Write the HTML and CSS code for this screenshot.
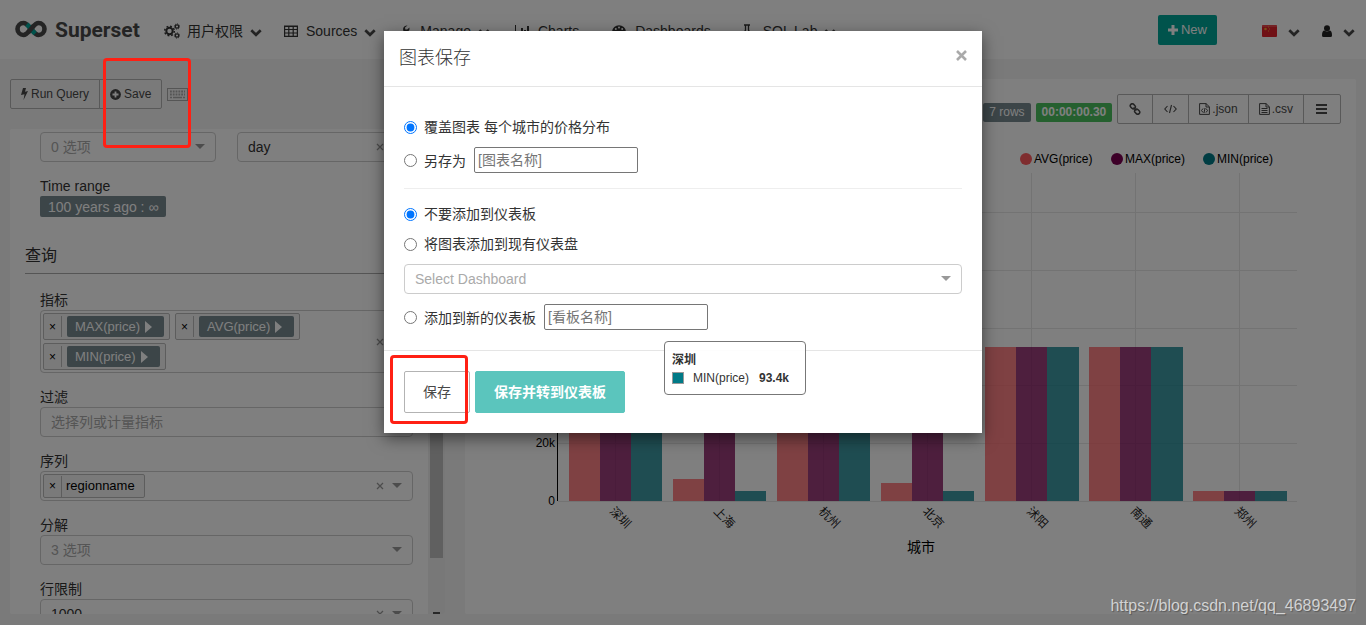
FILE: index.html
```html
<!DOCTYPE html>
<html lang="zh-CN">
<head>
<meta charset="utf-8">
<title>Superset</title>
<link rel="stylesheet" href="styles.css">
</head>
<body>
<svg class="defs" aria-hidden="true">
  <symbol id="chev" viewBox="0 0 12 8"><path d="M1.300 1.300 6 5.800l4.700-4.500" fill="none" stroke="currentColor" stroke-width="2.700"/></symbol>
  <symbol id="cross" viewBox="0 0 8 8"><path d="M1 1l6 6M7 1 1 7" fill="none" stroke="currentColor" stroke-width="1.300"/></symbol>
</svg>
<div class="app">
  <header class="navbar">
    <a class="brand" href="#">
      <svg width="32" height="18" viewBox="0 0 32 18"><g fill="none" stroke-width="4.600" stroke="#484848"><path d="M16 9C13 5.500 11.500 3 8.500 3a6 6 0 0 0 0 12C11.500 15 13 12.500 16 9s4.500-6 7.500-6a6 6 0 0 1 0 12C20.500 15 19 12.500 16 9z"/><path stroke="#00a699" d="M11.800 4.300Q14 6.300 16 9 18 11.500 20.200 13.700"/><path d="M13.300 12.200 18.700 5.800"/></g></svg>
      <span>Superset</span>
    </a>
    <nav class="menu">
      <a class="item" href="#"><svg class="ico" viewBox="0 0 16 16"><circle cx="5.500" cy="8" r="3.200" fill="none" stroke="currentColor" stroke-width="2"/><circle cx="5.500" cy="8" r="4.800" fill="none" stroke="currentColor" stroke-width="1.500" stroke-dasharray="1.900 1.870"/><g fill="none" stroke="currentColor"><circle cx="13" cy="3.500" r="1.700" stroke-width="1.200"/><circle cx="13" cy="3.500" r="2.600" stroke-dasharray="1 1"/><circle cx="13" cy="12.500" r="1.700" stroke-width="1.200"/><circle cx="13" cy="12.500" r="2.600" stroke-dasharray="1 1"/></g></svg>用户权限<svg class="chev"><use href="#chev"/></svg></a>
      <a class="item" href="#"><svg class="ico" viewBox="0 0 16 16"><path d="M1.600 3h12.800v10.400H1.600zM1 3.400h14M1.500 6.500h13M1.500 10h13M5.800 3v10M10.200 3v10" fill="none" stroke="currentColor" stroke-width="1.200"/></svg>Sources<svg class="chev"><use href="#chev"/></svg></a>
      <a class="item" href="#"><svg class="ico" viewBox="0 0 16 16"><path d="M2 13 6.500 8.500a4 4 0 0 1 4-6L8 4.500l.3 1.900 1.900.2L12.500 4.500a4 4 0 0 1-5.200 4.500L3.500 14.500z" fill="currentColor"/></svg>Manage<svg class="chev"><use href="#chev"/></svg></a>
      <a class="item plain" href="#"><svg class="ico" viewBox="0 0 16 16"><path d="M.5 2v11.500H16" fill="none" stroke="currentColor"/><path d="M3 9h2v3.500H3zM6 5h2v7.500H6zM9 7h2v5.500H9zM12 3h2v9.500h-2z" fill="currentColor"/></svg>Charts</a>
      <a class="item plain" href="#"><svg class="ico" viewBox="0 0 16 16"><path d="M1.500 13.500a7 7 0 1 1 11 0z" fill="currentColor"/><g fill="#fff"><circle cx="7" cy="4.500" r="1"/><circle cx="3.800" cy="6" r="1"/><circle cx="10.200" cy="6" r="1"/><circle cx="2.500" cy="9.500" r="1"/><circle cx="11.500" cy="9.500" r="1"/></g></svg>Dashboards</a>
      <a class="item" href="#"><svg class="ico" viewBox="0 0 16 16"><path d="M4 2h6M5.500 2v5L2 13.500h10L8.500 7V2" fill="none" stroke="currentColor" stroke-width="1.300"/><path d="M4.500 9.500h5l2 4h-9z" fill="currentColor"/></svg>SQL Lab<svg class="chev"><use href="#chev"/></svg></a>
    </nav>
    <button class="new" type="button"><svg width="10" height="10" viewBox="0 0 10 10"><path d="M5 0v10M0 5h10" stroke="currentColor" stroke-width="3"/></svg>New</button>
    <div class="account">
      <button class="drop" type="button" aria-label="语言"><svg class="flag" viewBox="0 0 15 12"><rect width="15" height="12" rx="1" fill="#e0202a"/><path d="M0 1h15" stroke="#f06a6a"/><circle cx="3.500" cy="4" r="1.300" fill="#f0a030"/><path d="M6 2h1M7 4h1M6 6h1" stroke="#f0a030"/></svg><svg class="chev"><use href="#chev"/></svg></button>
      <button class="drop" type="button" aria-label="用户"><svg class="user" viewBox="0 0 10 12"><circle cx="5" cy="3.200" r="3" fill="currentColor"/><path d="M0 10.500Q0 5.500 2.500 5.500q2.500 1.800 5 0Q10 5.500 10 10.500 10 12 8.500 12h-7Q0 12 0 10.500z" fill="currentColor"/></svg><svg class="chev"><use href="#chev"/></svg></button>
    </div>
  </header>

  <main class="explore">
    <section class="left">
      <div class="actions">
        <div class="group">
          <button type="button"><svg width="7" height="12" viewBox="0 0 7 12"><path d="M2 0h3L4 3.700 7 3 2.500 12l1-5.700L0 7z" fill="currentColor"/></svg>Run Query</button>
          <button type="button"><svg width="11" height="11" viewBox="0 0 11 11"><circle cx="5.500" cy="5.500" r="5.400" fill="currentColor"/><path d="M5.500 2.500v6M2.500 5.500h6" stroke="#fff" stroke-width="1.800"/></svg>Save</button>
        </div>
        <svg class="keys" viewBox="0 0 21 13"><rect x=".5" y=".5" width="20" height="12" fill="none" stroke="#aaa"/><path d="M3 3.500h15M3 6.500h15" stroke="#aaa" stroke-width="1.800" stroke-dasharray="1.800 1"/><path d="M3 9.500h2M6 9.500h9M16 9.500h2" stroke="#aaa" stroke-width="1.500"/></svg>
      </div>
      <div class="panel controls">
        <div class="scroll">
          <div class="pair">
            <div class="box"><select aria-label="选项"><option>0 选项</option></select><i class="arrow"></i></div>
            <div class="box"><select class="dark" aria-label="时间粒度"><option>day</option></select><button class="clear" type="button" aria-label="清除"><svg><use href="#cross"/></svg></button><i class="arrow"></i></div>
          </div>
          <div class="field"><span class="name">Time range</span><button class="range" type="button">100 years ago : ∞</button></div>
          <h2>查询</h2>
          <div class="field"><span class="name">指标</span>
            <div class="box">
              <div class="chips">
                <span class="chip"><button type="button">×</button><b>MAX(price)<i class="tri"></i></b></span>
                <span class="chip"><button type="button">×</button><b>AVG(price)<i class="tri"></i></b></span>
                <span class="chip"><button type="button">×</button><b>MIN(price)<i class="tri"></i></b></span>
              </div>
              <button class="clear" type="button" aria-label="清除"><svg><use href="#cross"/></svg></button><i class="arrow"></i>
            </div>
          </div>
          <div class="field"><label class="name" for="filter">过滤</label><div class="box"><select id="filter"><option>选择列或计量指标</option></select></div></div>
          <div class="field"><span class="name">序列</span>
            <div class="box"><div class="chips"><span class="chip text"><button type="button">×</button><em>regionname</em></span></div><button class="clear" type="button" aria-label="清除"><svg><use href="#cross"/></svg></button><i class="arrow"></i></div>
          </div>
          <div class="field"><label class="name" for="split">分解</label><div class="box"><select id="split"><option>3 选项</option></select><i class="arrow"></i></div></div>
          <div class="field"><label class="name" for="limit">行限制</label><div class="box"><select id="limit" class="dark"><option>1000</option></select><button class="clear" type="button" aria-label="清除"><svg><use href="#cross"/></svg></button><i class="arrow"></i></div></div>
        </div>
        <div class="rail"><div class="thumb"></div><div class="dash"></div></div>
      </div>
    </section>

    <section class="panel chart">
      <div class="tools">
        <span class="tag">7 rows</span>
        <span class="tag ok">00:00:00.30</span>
        <div class="group">
          <button type="button" aria-label="链接"><svg width="12" height="12" viewBox="0 0 12 12"><g fill="none" stroke="currentColor" stroke-width="1.500"><rect x="1" y="1.500" width="5.500" height="4" rx="2" transform="rotate(45 4 3.500)"/><rect x="5.500" y="6.500" width="5.500" height="4" rx="2" transform="rotate(45 8 8.500)"/><path d="M4.500 4.500l3 3"/></g></svg></button>
          <button type="button" aria-label="代码"><svg width="13" height="10" viewBox="0 0 13 10"><path d="M3.500 2 .8 5l2.700 3M9.500 2l2.700 3-2.700 3M7.500 1l-2 8" fill="none" stroke="currentColor" stroke-width="1.100"/></svg></button>
          <button type="button"><svg width="11" height="12" viewBox="0 0 11 12"><path d="M.6.6h6.400l3.400 3.200v7.600H.6zM7 .6v3.400h3.400M4 5.500 2.500 7.500 4 9.500M7 5.500l1.500 2L7 9.500M6 5 5 10" fill="none" stroke="currentColor"/></svg>.json</button>
          <button type="button"><svg width="11" height="12" viewBox="0 0 11 12"><path d="M.6.6h6.400l3.400 3.200v7.600H.6zM7 .6v3.400h3.400M2.500 5.500h6M2.500 7.500h6M2.500 9.500h6" fill="none" stroke="currentColor"/></svg>.csv</button>
          <button type="button" aria-label="菜单"><svg width="11" height="10" viewBox="0 0 11 10"><path d="M0 1h11M0 5h11M0 9h11" stroke="currentColor" stroke-width="2"/></svg></button>
        </div>
      </div>
      <svg class="plot" viewBox="0 0 891 490">
        <g class="legend">
          <circle cx="561" cy="35" r="6" fill="#ff5a5f"/><text x="569" y="39">AVG(price)</text>
          <circle cx="652" cy="35" r="6" fill="#7b0051"/><text x="660" y="39">MAX(price)</text>
          <circle cx="744" cy="35" r="6" fill="#007a87"/><text x="752" y="39">MIN(price)</text>
        </g>
        <g transform="translate(93 377)">
          <path class="grid" d="M0-57.500h739M0-115.500h739M0-172.500h739M0-230.500h739M0-288.500h739M0 .5h739M57.500 0v-328M161.500 0v-328M265.500 0v-328M369.500 0v-328M473.500 0v-328M577.500 0v-328M681.500 0v-328"/>
          <g class="bars">
            <path fill="#ff5a5f" d="M11 0v-270h31V0zM115 0v-22h31V0zM219 0v-270h31V0zM323 0v-18h31V0zM427 0v-154h31V0zM531 0v-154h31V0zM635 0v-10h31V0z"/>
            <path fill="#7b0051" d="M42 0v-270h31V0zM146 0v-200h31V0zM250 0v-270h31V0zM354 0v-200h31V0zM458 0v-154h31V0zM562 0v-154h31V0zM666 0v-10h31V0z"/>
            <path fill="#007a87" d="M73 0v-270h31V0zM177 0v-10h31V0zM281 0v-270h31V0zM385 0v-10h31V0zM489 0v-154h32V0zM593 0v-154h32V0zM697 0v-10h32V0z"/>
          </g>
          <path class="axis" d="M-.5 0v-328"/>
          <text class="tick" x="-3" y="-54">20k</text><text class="tick" x="-3" y="4">0</text>
          <g class="cats">
            <text transform="translate(51 11) rotate(45)">深圳</text>
            <text transform="translate(155 11) rotate(45)">上海</text>
            <text transform="translate(260 11) rotate(45)">杭州</text>
            <text transform="translate(364 11) rotate(45)">北京</text>
            <text transform="translate(468 11) rotate(45)">沭阳</text>
            <text transform="translate(572 11) rotate(45)">南通</text>
            <text transform="translate(676 11) rotate(45)">郑州</text>
          </g>
          <text class="title" x="363" y="51">城市</text>
        </g>
      </svg>
    </section>
  </main>
</div>

<div class="backdrop">
  <form class="modal" role="dialog" aria-labelledby="dlg">
    <div class="head"><h1 id="dlg">图表保存</h1><button type="button" aria-label="关闭"><svg width="11" height="11" viewBox="0 0 11 11"><path d="M1 1l9 9M10 1l-9 9" stroke="currentColor" stroke-width="2.600"/></svg></button></div>
    <div class="body">
      <div class="row"><input type="radio" name="act" id="over" checked><label for="over">覆盖图表 每个城市的价格分布</label></div>
      <div class="row tall"><input type="radio" name="act" id="as"><label for="as">另存为</label><input type="text" placeholder="[图表名称]" aria-label="图表名称"></div>
      <hr>
      <div class="row"><input type="radio" name="dash" id="none" checked><label for="none">不要添加到仪表板</label></div>
      <div class="row"><input type="radio" name="dash" id="old"><label for="old">将图表添加到现有仪表盘</label></div>
      <div class="box"><select aria-label="仪表盘"><option>Select Dashboard</option></select><i class="arrow"></i></div>
      <div class="row tall"><input type="radio" name="dash" id="fresh"><label for="fresh">添加到新的仪表板</label><input type="text" placeholder="[看板名称]" aria-label="看板名称"></div>
    </div>
    <div class="foot"><button type="button">保存</button><button class="primary" type="button">保存并转到仪表板</button></div>
  </form>
</div>
<div class="tip"><strong>深圳</strong><div><i></i><span>MIN(price)</span><strong>93.4k</strong></div></div>
<div class="mark mark-top"></div>
<div class="mark mark-save"></div>
<div class="credit">https://blog.csdn.net/qq_46893497</div>
</body>
</html>
```
FILE: styles.css
```css
* { box-sizing: border-box; }
body {
  margin: 0;
  font: 14px/20px "Liberation Sans", "Noto Sans CJK SC", sans-serif;
  color: #333;
  background: #f5f5f5;
}
button, select, input { font: inherit; color: inherit; margin: 0; }
button { background: none; border: 0; padding: 0; }
a { color: inherit; text-decoration: none; }
.defs { position: absolute; width: 0; height: 0; }

.app { height: 100vh; display: flex; flex-direction: column; overflow: hidden; }

/* top bar */
.navbar {
  display: flex;
  align-items: center;
  height: 59px;
  flex: none;
  padding: 2px 11px 0 15px;
  background: #fff;
}
.brand { display: flex; align-items: center; gap: 8px; width: 149px; font: bold 21px/24px Roboto, sans-serif; color: #484848; }
.brand svg { margin-bottom: 4px; }
.brand span { margin-bottom: 2px; }
.menu { display: flex; gap: 21px; flex: 1; }
.item { display: flex; align-items: center; white-space: nowrap; }
.item.plain { padding: 0 8px 0 4px; }
.ico { width: 16px; height: 16px; margin-right: 7px; }
.chev { width: 12px; height: 8px; margin: 5px 0 0 7px; color: #484848; }
.new {
  display: flex;
  align-items: center;
  gap: 3px;
  height: 30px;
  margin-bottom: 2px;
  padding: 0 10px;
  border-radius: 2px;
  background: #00a699;
  color: #fff;
  font-size: 13px;
}
.account { display: flex; gap: 22px; margin-left: 45px; }
.drop { display: flex; align-items: center; gap: 4px; }
.flag { width: 15px; height: 12px; }
.user { width: 10px; height: 12px; color: #222; }

/* page body */
.explore {
  flex: 1;
  min-height: 0;
  display: grid;
  grid-template-columns: minmax(0, 435fr) minmax(0, 891fr);
  gap: 20px;
  padding: 20px 10px 11px;
}
.left { display: flex; flex-direction: column; gap: 20px; min-height: 0; }
.panel { background: #fff; border-radius: 2px; overflow: hidden; }
.actions { display: flex; align-items: center; gap: 5px; }
.group { display: flex; }
.group button {
  display: flex;
  align-items: center;
  gap: 3px;
  height: 30px;
  padding: 0 10px;
  border: 1px solid #b3b3b3;
  font-size: 12px;
  color: #484848;
}
.group button + button { margin-left: -1px; }
.group button:first-child { border-radius: 2px 0 0 2px; }
.group button:last-child { border-radius: 0 2px 2px 0; }
.keys { width: 21px; height: 13px; }

.controls { flex: 1; min-height: 0; display: flex; }
.scroll { flex: 1; min-width: 0; padding: 3px 15px 0 30px; overflow: hidden; }
.rail { width: 17px; background: #f1f1f1; display: flex; flex-direction: column; align-items: center; justify-content: space-between; }
.thumb { width: 13px; height: 88.500%; background: #c1c1c1; }
.dash { width: 7px; height: 2px; background: #505050; }
.pair { display: grid; grid-template-columns: 1fr 1fr; gap: 21px; margin-bottom: 14px; }
.field { margin-bottom: 14px; }
.name { display: block; }
.box {
  display: flex;
  align-items: center;
  min-height: 30px;
  border: 1px solid #ccc;
  border-radius: 4px;
  background: #fff;
}
.box select {
  appearance: none;
  flex: 1;
  min-width: 0;
  height: 28px;
  padding: 0 10px;
  border: 0;
  background: none;
  color: #aaa;
}
.box select.dark { color: #333; }
.arrow { border: 5px solid transparent; border-top-color: #999; border-bottom: 0; margin: 0 10px 2px 8px; }
.clear { width: 8px; display: flex; color: #999; }
.clear svg { width: 8px; height: 8px; }
.range { display: block; height: 21px; padding: 0 8px; border-radius: 2px; background: #788a90; color: #fff; }
h2 { margin: 0 0 16px -15px; padding: 13px 0 5px; font-size: 16px; font-weight: normal; line-height: 24px; border-bottom: 1px solid #aaa; }
.chips { flex: 1; display: flex; flex-wrap: wrap; gap: 3px 5px; padding: 2px; }
.chip { display: flex; align-items: center; height: 27px; border: 1px solid #bbb; border-radius: 2px; background: #f5f5f5; padding-right: 5px; }
.chip button { width: 18px; height: 21px; border-right: 1px solid #bbb; font-size: 12px; line-height: 16px; color: #000; }
.chip b { display: flex; align-items: center; gap: 5px; height: 21px; margin-left: 5px; padding: 0 12px 0 8px; border-radius: 2px; background: #788a90; color: #fff; font-weight: normal; font-size: 13px; }
.chip em { padding: 0 4px; font-style: normal; font-size: 13px; color: #000; }
.chip.text { height: 24px; }
.tri { border: 6px solid transparent; border-left: 7px solid #fff; border-right: 0; }

/* chart */
.chart { display: flex; flex-direction: column; padding: 15px 0 0; }
.tools { display: flex; align-items: center; justify-content: flex-end; gap: 5px; padding-right: 15px; }
.tools .group { height: 30px; }
.tools .group button { padding: 0 11px; gap: 2px; }
.tools .group button:nth-child(n + 3) { padding: 0 10px; }
.tools .group button:last-child { padding: 0 13px 0 12px; }
.tag { height: 19px; margin-top: 6px; padding: 0 6px; border-radius: 2px; background: #788a90; color: #fff; font-size: 12px; line-height: 19px; }
.tag.ok { background: #4ac15f; font-weight: bold; }
.plot { width: 100%; flex: 1; min-height: 0; font-size: 12px; }
.grid { fill: none; stroke: #e6e6e6; }
.bars { opacity: .75; }
.axis { stroke: #000; }
.tick { text-anchor: end; fill: #000; }
.title { text-anchor: middle; font-size: 14px; fill: #000; }
.legend { fill: #000; }
.cats { fill: #222; }

/* dialog */
.backdrop { position: absolute; inset: 0; background: rgba(0, 0, 0, .5); padding: 31px 20px; }
.modal { max-width: 598px; margin: 0 auto; background: #fff; box-shadow: 0 5px 15px rgba(0, 0, 0, .5); }
.head { display: flex; justify-content: space-between; padding: 15px; border-bottom: 1px solid #e5e5e5; }
.head h1 { margin: 0; font-size: 18px; font-weight: 300; line-height: 25px; color: #333; }
.head button { height: 18px; color: #aaa; }
.body { padding: 30px 20px 19px; }
.row { display: flex; align-items: center; height: 20px; margin-bottom: 10px; }
.row.tall { height: 27px; }
.row input[type="radio"] { width: 13px; height: 13px; margin-right: 7px; }
.row input[type="text"] { width: 164px; height: 26px; margin: 0 0 2px 8px; padding: 1px 3px; border: 1px solid #767676; border-radius: 2px; }
.body hr { margin: 14px 0 15px; border: 0; border-top: 1px solid #eee; }
.body .box { margin-bottom: 10px; }
.body .row:last-child { margin: 0; }
.foot { display: flex; gap: 5px; padding: 20px; border-top: 1px solid #e5e5e5; }
.foot button { height: 42px; padding: 0 18px; border: 1px solid #b3b3b3; border-radius: 2px; color: #484848; }
.foot .primary { background: #5bc5bd; border-color: #5bc5bd; color: #fff; font-weight: bold; }

/* floating layers */
.tip {
  position: absolute;
  left: 664px;
  top: 341px;
  padding: 9px 16px 7px 7px;
  border: 1px solid #777;
  border-radius: 4px;
  background: rgba(255, 255, 255, .9);
  font-size: 12px;
  line-height: 18px;
}
.tip > strong { display: block; }
.tip div { display: flex; align-items: center; }
.tip i { width: 12px; height: 12px; margin-right: 9px; background: #007a87; border: 1px solid #999; }
.tip span { margin-right: 10px; }
.mark { position: absolute; border: 3px solid #ff2014; border-radius: 4px; }
.mark-top { left: 103px; top: 58px; width: 88px; height: 90px; }
.mark-save { left: 390px; top: 355px; width: 78px; height: 69px; }
.credit { position: absolute; right: 10px; bottom: 9px; font-size: 16px; color: rgba(255, 255, 255, .7); text-shadow: 1px 1px 1px rgba(0, 0, 0, .3); }
```
